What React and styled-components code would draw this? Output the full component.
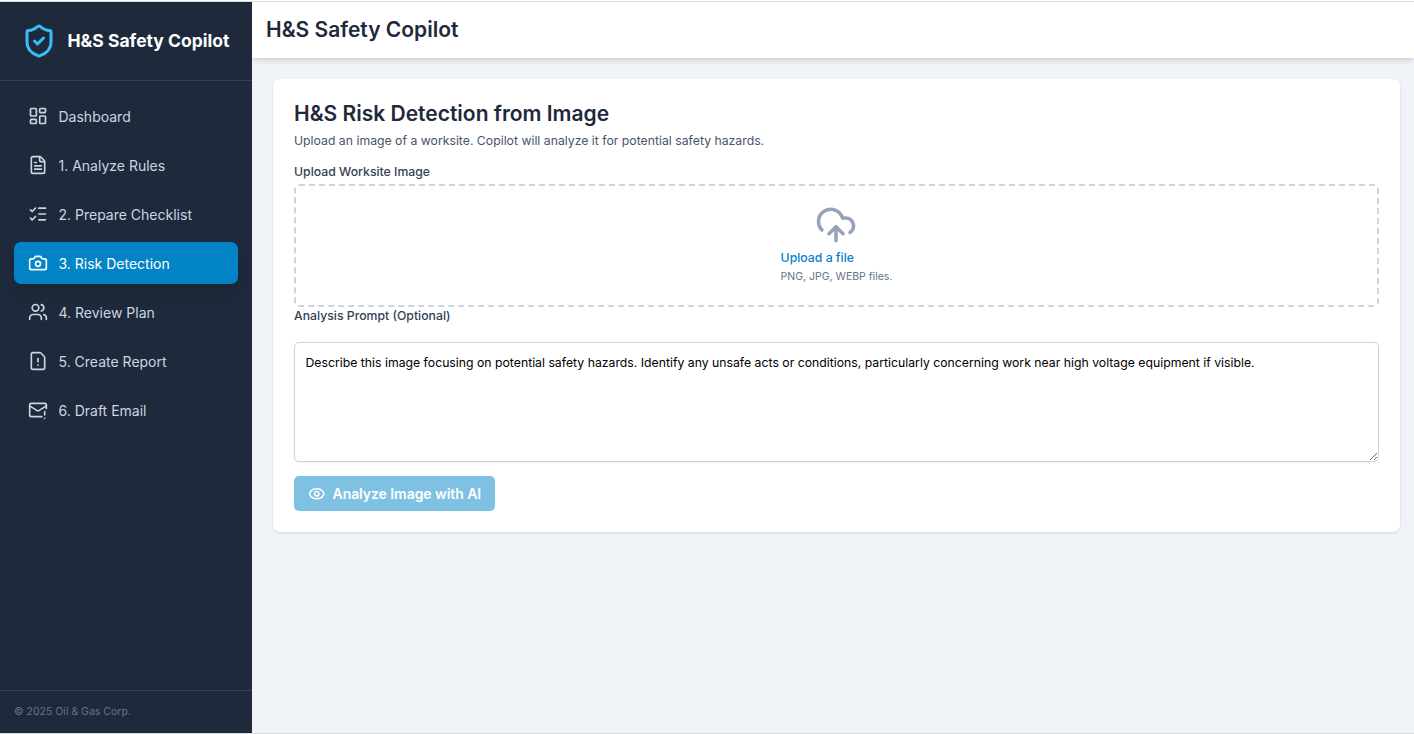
import React from "react";
import styled, { createGlobalStyle } from "styled-components";
import {
  ShieldCheck,
  LayoutDashboard,
  FileText,
  ListChecks,
  Camera,
  Users,
  FileWarning,
  MailWarning,
  CloudUpload,
  Eye,
} from "lucide-react";

const GlobalStyle = createGlobalStyle`
  *, *::before, *::after { box-sizing: border-box; }
  html { font-size: 14px; }
  body {
    margin: 0;
    background: #ffffff;
    font-family: Inter, "Liberation Sans", sans-serif;
    line-height: 1.5;
    overflow: hidden;
  }
  h1, h2, p { margin: 0; }
  svg { display: block; flex-shrink: 0; }
`;

const Frame = styled.div`
  height: 734px;
  padding-top: 1px;
`;

const Shell = styled.div`
  height: 733px;
  display: flex;
  border-top: 1px solid #dadce0;
  border-bottom: 1px solid #dadce0;
  background: #f0f4f8;
`;

const Sidebar = styled.aside`
  width: 18rem;
  flex-shrink: 0;
  display: flex;
  flex-direction: column;
  background: #1e293b;
  color: #cbd5e1;
`;

const Brand = styled.div`
  height: 79px;
  display: flex;
  align-items: center;
  gap: 10.5px;
  padding: 0 21px;
  border-bottom: 1px solid #334155;
  color: #38bdf8;
`;

const BrandName = styled.span`
  color: #ffffff;
  font-size: 1.25rem;
  line-height: 1.75rem;
  font-weight: 700;
  white-space: nowrap;
`;

const Nav = styled.nav`
  flex: 1;
  display: flex;
  flex-direction: column;
  gap: 0.5rem;
  padding: 1rem;
`;

const NavItem = styled.a`
  height: 3rem;
  display: flex;
  align-items: center;
  gap: 0.75rem;
  padding: 0 1rem;
  border-radius: 7px;
  font-size: 1rem;
  color: ${(p) => (p.$active ? "#ffffff" : "#cbd5e1")};
  background: ${(p) => (p.$active ? "#0284c7" : "transparent")};
  box-shadow: ${(p) =>
    p.$active
      ? "0 10px 15px -3px rgba(0,0,0,0.1), 0 4px 6px -4px rgba(0,0,0,0.1)"
      : "none"};
`;

const SidebarFooter = styled.div`
  height: 43px;
  padding: 1rem;
  border-top: 1px solid #334155;
  font-size: 0.75rem;
  line-height: 1rem;
  color: #64748b;
`;

const Content = styled.div`
  flex: 1;
  min-width: 0;
  display: flex;
  flex-direction: column;
`;

const Header = styled.header`
  padding: 1rem;
  background: #ffffff;
  box-shadow: 0 4px 6px -1px rgba(0, 0, 0, 0.1), 0 2px 4px -2px rgba(0, 0, 0, 0.1);
  clip-path: inset(0 0 -20px 0);
`;

const Heading = styled.h1`
  font-size: 1.5rem;
  line-height: 2rem;
  font-weight: 600;
  color: #1e293b;
`;

const Main = styled.main`
  flex: 1;
  padding: 1.5rem 1rem 1.5rem 1.5rem;
`;

const Card = styled.section`
  height: 453px;
  padding: 1.5rem;
  border-radius: 7px;
  background: #ffffff;
  box-shadow: 0 1px 3px rgba(0, 0, 0, 0.1), 0 1px 2px -1px rgba(0, 0, 0, 0.1);
`;

const Description = styled.p`
  margin-top: 0.25rem;
  font-size: 0.875rem;
  line-height: 1.25rem;
  color: #475569;
`;

const Label = styled.label`
  display: block;
  margin-top: ${(p) => p.$top || "0"};
  font-size: 0.875rem;
  line-height: 1.25rem;
  font-weight: 500;
  color: #334155;
`;

const DropZone = styled.div`
  height: 123px;
  margin-top: 0.25rem;
  display: flex;
  justify-content: center;
  padding-top: 17.5px;
  border: 2px dashed #cbd5e1;
  border-radius: 5px;
`;

const DropContent = styled.div`
  color: #94a3b8;

  svg {
    margin: 0 auto 3.5px;
  }
`;

const UploadLink = styled.span`
  display: block;
  font-size: 0.875rem;
  line-height: 1.25rem;
  font-weight: 500;
  color: #0284c7;
`;

const FileHint = styled.p`
  margin-top: 3.5px;
  font-size: 0.75rem;
  line-height: 1rem;
  color: #64748b;
`;

const Prompt = styled.textarea`
  display: block;
  width: 100%;
  height: 120px;
  margin: 17.5px 0 0;
  padding: 10.5px;
  border: 1px solid #cbd5e1;
  border-radius: 5px;
  background: #ffffff;
  color: #000000;
  font-family: inherit;
  font-size: 0.875rem;
  line-height: 1.25rem;
  box-shadow: 0 1px 2px rgba(0, 0, 0, 0.05);
  outline: none;
`;

const AnalyzeButton = styled.button`
  width: 201px;
  height: 35px;
  margin-top: 14px;
  display: inline-flex;
  align-items: center;
  gap: 0.5rem;
  padding: 0 1rem;
  border: 0;
  border-radius: 5px;
  background: #0284c7;
  color: #ffffff;
  font-family: inherit;
  font-size: 1rem;
  font-weight: 600;
  letter-spacing: -0.06px;
  white-space: nowrap;
  opacity: 0.5;
`;

const NAV_ITEMS = [
  { icon: LayoutDashboard, label: "Dashboard" },
  { icon: FileText, label: "1. Analyze Rules" },
  { icon: ListChecks, label: "2. Prepare Checklist" },
  { icon: Camera, label: "3. Risk Detection", active: true },
  { icon: Users, label: "4. Review Plan" },
  { icon: FileWarning, label: "5. Create Report" },
  { icon: MailWarning, label: "6. Draft Email" },
];

export default function App() {
  return (
    <Frame>
      <GlobalStyle />
      <Shell>
        <Sidebar>
          <Brand>
            <ShieldCheck size={36} />
            <BrandName>H&amp;S Safety Copilot</BrandName>
          </Brand>
          <Nav>
            {NAV_ITEMS.map(({ icon: Icon, label, active }) => (
              <NavItem key={label} $active={active}>
                <Icon size={20} />
                <span>{label}</span>
              </NavItem>
            ))}
          </Nav>
          <SidebarFooter>© 2025 Oil &amp; Gas Corp.</SidebarFooter>
        </Sidebar>
        <Content>
          <Header>
            <Heading>H&amp;S Safety Copilot</Heading>
          </Header>
          <Main>
            <Card>
              <Heading as="h2">H&amp;S Risk Detection from Image</Heading>
              <Description>
                Upload an image of a worksite. Copilot will analyze it for potential safety hazards.
              </Description>
              <Label $top="14px">Upload Worksite Image</Label>
              <DropZone>
                <DropContent>
                  <CloudUpload size={42} />
                  <UploadLink>Upload a file</UploadLink>
                  <FileHint>PNG, JPG, WEBP files.</FileHint>
                </DropContent>
              </DropZone>
              <Label htmlFor="prompt">Analysis Prompt (Optional)</Label>
              <Prompt
                id="prompt"
                spellCheck={false}
                defaultValue="Describe this image focusing on potential safety hazards. Identify any unsafe acts or conditions, particularly concerning work near high voltage equipment if visible."
              />
              <AnalyzeButton disabled>
                <Eye size={17.5} />
                <span>Analyze Image with AI</span>
              </AnalyzeButton>
            </Card>
          </Main>
        </Content>
      </Shell>
    </Frame>
  );
}
